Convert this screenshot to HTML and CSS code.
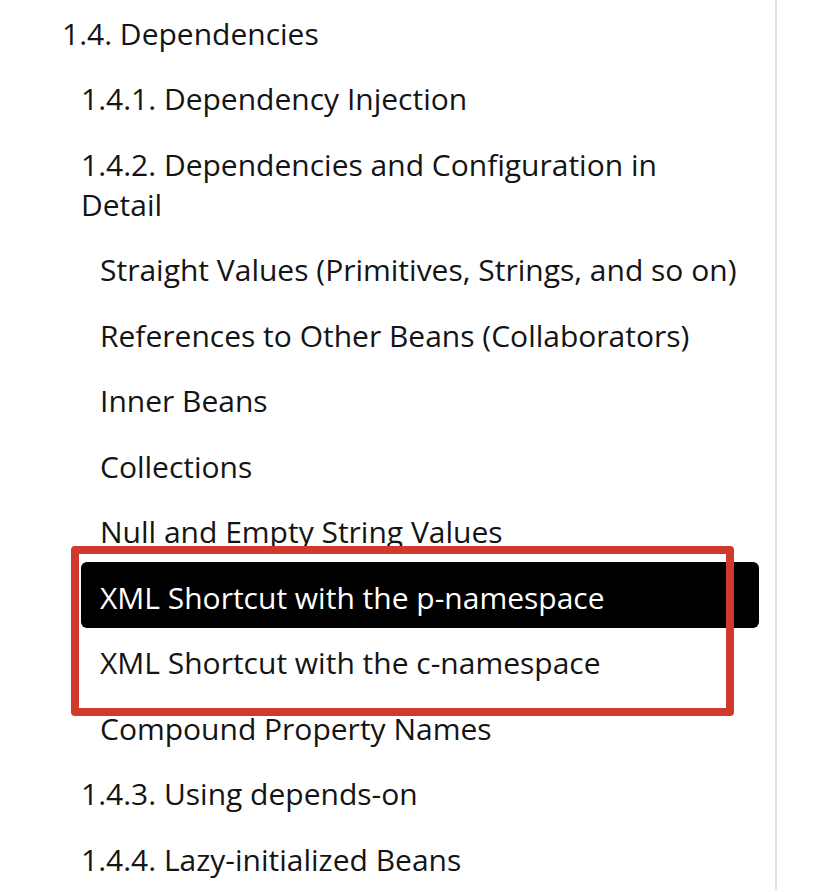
FILE: index.html
```html
<!DOCTYPE html>
<html lang="en">
<head>
<meta charset="utf-8">
<title>Table of contents</title>
<link rel="stylesheet" href="styles.css">
</head>
<body>
<div class="page">
  <nav class="toc">
    <ul class="lvl lvl1">
      <li class="item"><a>1.4. Dependencies</a>
        <ul class="lvl lvl2">
          <li class="item"><a>1.4.1. Dependency Injection</a></li>
          <li class="item"><a>1.4.2. Dependencies and Configuration in Detail</a>
            <ul class="lvl lvl3">
              <li class="item"><a>Straight Values (Primitives, Strings, and so on)</a></li>
              <li class="item"><a>References to Other Beans (Collaborators)</a></li>
              <li class="item"><a>Inner Beans</a></li>
              <li class="item"><a>Collections</a></li>
              <li class="item"><a>Null and Empty String Values</a></li>
              <li class="item"><a class="active">XML Shortcut with the p-namespace</a></li>
              <li class="item"><a>XML Shortcut with the c-namespace</a></li>
              <li class="item"><a>Compound Property Names</a></li>
            </ul>
          </li>
          <li class="item"><a>1.4.3. Using depends-on</a></li>
          <li class="item"><a>1.4.4. Lazy-initialized Beans</a></li>
        </ul>
      </li>
    </ul>
  </nav>
  <div class="annotation"></div>
</div>
</body>
</html>
```

FILE: styles.css
```css
html, body {
  margin: 0;
  padding: 0;
  background: #ffffff;
}

.page {
  position: relative;
  width: 834px;
  height: 892px;
  overflow: hidden;
  font-family: "Open Sans", "Noto Sans", sans-serif;
}

.toc {
  width: 777px;
  height: 892px;
  box-sizing: border-box;
  border-right: 2px solid #e3e3e3;
  padding: 0 16px 0 43px;
}

.lvl {
  list-style: none;
  margin: 0;
  padding: 0;
}

.lvl1 {
  margin-top: -2px;
}

.lvl2,
.lvl3 {
  padding-left: 19px;
}

.item a {
  display: block;
  padding: 15.5px 19px 10px;
  font-size: 30px;
  line-height: 40px;
  color: #141414;
  border-radius: 6px;
  text-decoration: none;
}

.item a.active {
  background: #000000;
  color: #ffffff;
}

.annotation {
  position: absolute;
  left: 71px;
  top: 546px;
  width: 663px;
  height: 170px;
  box-sizing: border-box;
  border: 8px solid #cf3a2b;
  border-radius: 4px;
}
```
